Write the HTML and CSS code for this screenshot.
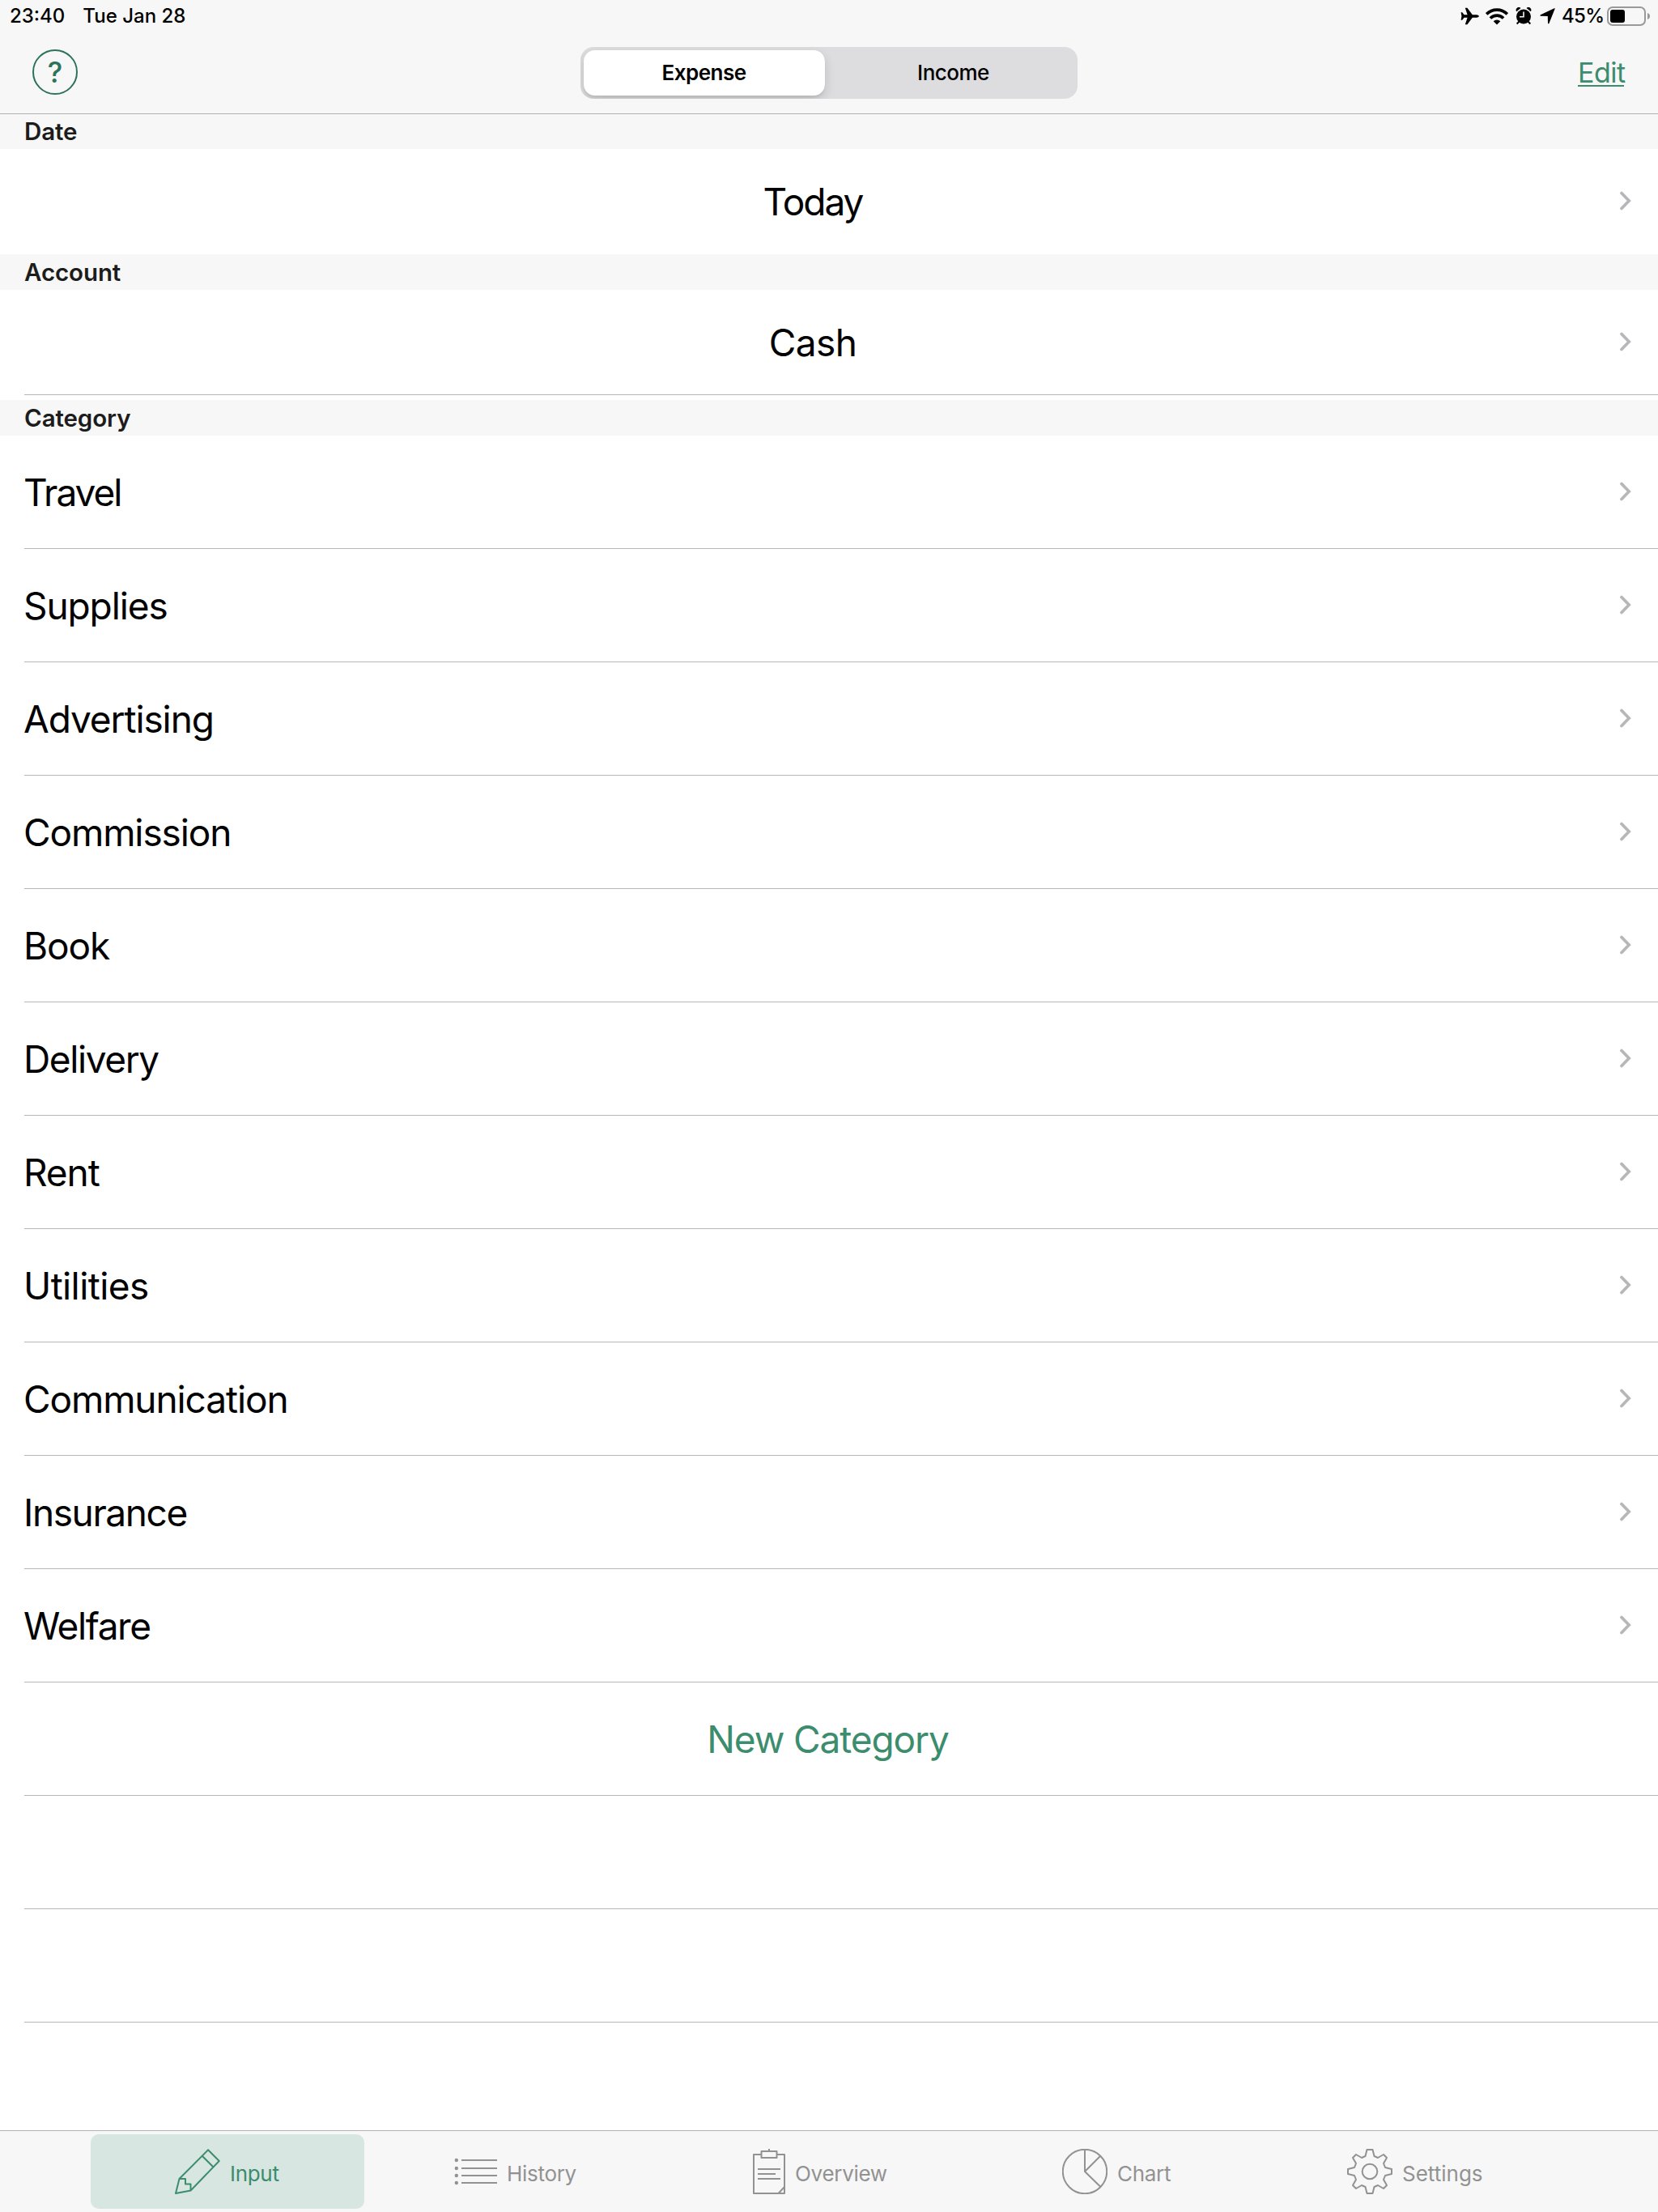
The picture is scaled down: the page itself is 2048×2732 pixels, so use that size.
FILE: index.html
```html
<!DOCTYPE html>
<html lang="en">
<head>
<meta charset="utf-8">
<title>Input</title>
<link rel="stylesheet" href="styles.css">
</head>
<body>
<svg class="defs" width="0" height="0"><symbol id="chev" viewBox="0 0 14 24"><path d="M2 2.500L11.200 12L2 21.500" fill="none" stroke="#b7b7b9" stroke-width="3.700" stroke-linecap="round"/></symbol></svg>
<header class="top">
  <div class="status">
    <span class="time">23:40</span><span class="day">Tue Jan 28</span>
    <div class="indicators">
      <svg class="plane" width="24" height="22" viewBox="0 0 24 22"><path d="M22.800 11c0-1-1.600-1.700-3-1.700h-5L8.400.8H5.800l2.800 8.400H4.600L2.200 6.300H.6L1.400 11 .6 15.700h1.600l2.400-2.900h4l-2.800 8.400h2.600l6.400-8.500h5c1.400 0 3-.7 3-1.700z"/></svg>
      <svg class="wifi" width="28" height="21" viewBox="0 0 28 21"><g fill="none" stroke="#000" stroke-width="3.700"><path d="M1.200 7.400a18 18 0 0 1 25.600 0"/><path d="M5.900 12.500a11.500 11.500 0 0 1 16.200 0"/></g><path d="M14 20.500l-4.300-4.200a6 6 0 0 1 8.600 0z"/></svg>
      <svg class="alarm" width="20" height="22" viewBox="0 0 20 22"><circle cx="10" cy="11.500" r="9"/><path d="M1.200 5.200a3.400 3.400 0 0 1 5.300-4.200zM18.800 5.200a3.400 3.400 0 0 0-5.300-4.200z"/><path d="M4.500 17.500l-2.800 3M15.500 17.500l2.800 3" stroke="#000" stroke-width="2"/><path d="M10 5.500v6.300H5" fill="none" stroke="#f7f7f7" stroke-width="1.600"/></svg>
      <svg class="arrow" width="20" height="20" viewBox="0 0 20 20"><path d="M18.600 1.100c.4-.6-.1-1.100-.8-.8L1 8.300c-1 .5-.8 1.500.2 1.500l8.600.2.200 8.400c0 1.100 1 1.300 1.500.3z"/></svg>
      <span class="pct">45%</span>
      <svg class="battery" width="54" height="24" viewBox="0 0 54 24"><rect x="1" y="1" width="46" height="22" rx="6" fill="none" stroke="#999" stroke-width="2"/><rect x="4" y="4" width="18" height="16" rx="3"/><path d="M50 8c4 1.300 4 6.700 0 8z" fill="#999"/></svg>
    </div>
  </div>
  <nav class="bar">
    <div class="help">?</div>
    <div class="segments"><div class="seg on">Expense</div><div class="seg">Income</div></div>
    <div class="edit">Edit</div>
  </nav>
</header>
<main>
  <h2 class="section first">Date</h2>
  <div class="pick"><span class="tight">Today</span><svg class="chev"><use href="#chev"/></svg></div>
  <h2 class="section">Account</h2>
  <div class="pick account"><span class="loose">Cash</span><svg class="chev"><use href="#chev"/></svg></div>
  <h2 class="section category">Category</h2>
  <ul class="list">
    <li><span class="tight">Travel</span><svg class="chev"><use href="#chev"/></svg></li>
    <li><span>Supplies</span><svg class="chev"><use href="#chev"/></svg></li>
    <li><span>Advertising</span><svg class="chev"><use href="#chev"/></svg></li>
    <li><span>Commission</span><svg class="chev"><use href="#chev"/></svg></li>
    <li><span>Book</span><svg class="chev"><use href="#chev"/></svg></li>
    <li><span class="snug">Delivery</span><svg class="chev"><use href="#chev"/></svg></li>
    <li><span>Rent</span><svg class="chev"><use href="#chev"/></svg></li>
    <li><span class="loose">Utilities</span><svg class="chev"><use href="#chev"/></svg></li>
    <li><span>Communication</span><svg class="chev"><use href="#chev"/></svg></li>
    <li><span class="snug">Insurance</span><svg class="chev"><use href="#chev"/></svg></li>
    <li><span class="snug">Welfare</span><svg class="chev"><use href="#chev"/></svg></li>
    <li class="new"><span>New Category</span></li>
    <li></li>
    <li></li>
  </ul>
</main>
<footer class="tabs">
  <div class="tab on"><svg width="56" height="56" viewBox="0 0 56 56"><path d="M1 55L5.500 37L41 1.300L54.700 15L19.500 51.500ZM33.500 8.500L47.500 22.500M5.500 37H13V43.500H19.500V51.500"/></svg><span>Input</span></div>
  <div class="tab"><svg width="56" height="56" viewBox="0 0 56 56"><path d="M12 14H56M12 24H56M12 33H56M12 42H56"/><g fill="#929292" stroke="none"><circle cx="5.800" cy="14" r="2.200"/><circle cx="5.800" cy="24" r="2.200"/><circle cx="5.800" cy="33" r="2.200"/><circle cx="5.800" cy="42" r="2.200"/></g></svg><span>History</span></div>
  <div class="tab"><svg width="40" height="56" viewBox="0 0 40 56"><path d="M10.500 7H1V55H39V7H29.500M10.500 3H29.500V11H10.500ZM20 0V3M6 25H34M6 31H28M6 37H34M31.500 55L39 47"/></svg><span>Overview</span></div>
  <div class="tab"><svg width="56" height="56" viewBox="0 0 56 56"><path d="M28 .8V28L47 9M28 28L47.500 47"/><circle cx="28" cy="28" r="27.200"/></svg><span>Chart</span></div>
  <div class="tab settings"><svg width="56" height="56" viewBox="0 0 56 56"><path d="M24.500 1H31.500L33.500 9L38 11L45 7L49 11L45 18L47 23L55 25V31L47 33L45 38L49 45L45 49L38 45L33.500 47L31.500 55H24.500L22.500 47L18 45L11 49L7 45L11 38L9 33L1 31V25L9 23L11 18L7 11L11 7L18 11L22.500 9Z"/><circle cx="28" cy="28" r="9.300"/></svg><span>Settings</span></div>
</footer>
</body>
</html>
```
FILE: styles.css
```css
* { box-sizing: border-box; }
body { margin: 0; width: 2048px; height: 2732px; display: flex; flex-direction: column; overflow: hidden; background: #fff; color: #000; font-family: Inter, "Liberation Sans", sans-serif; }
.defs { display: none; }
.top { height: 141px; background: #f7f7f7; border-bottom: 1px solid #b2b2b2; }
.status { height: 40px; display: flex; align-items: center; padding: 0 9px 0 12px; font-size: 24px; line-height: 40px; font-weight: 500; }
.day { margin-left: 22px; }
.indicators { margin-left: auto; display: flex; align-items: center; }
.wifi { margin-left: 7px; }
.alarm { margin-left: 9px; }
.arrow { margin-left: 10px; }
.pct { width: 56px; margin-left: 7px; letter-spacing: -0.7px; }
.bar { height: 100px; display: flex; justify-content: space-between; padding: 18px 42px 0 40px; }
.help { width: 56px; height: 56px; margin-top: 3px; border: 2px solid #2b7359; border-radius: 50%; color: #2b7359; font-size: 35px; line-height: 52px; font-weight: 500; text-align: center; }
.segments { width: 614px; height: 64px; margin-left: 2px; padding: 4px; display: flex; border-radius: 16px; background: #dddddf; overflow: hidden; }
.seg { flex: 1; display: flex; align-items: center; justify-content: center; font-size: 26px; font-weight: 500; padding: 0 0 2px 10px; letter-spacing: -0.5px; }
.seg.on { flex: 0 0 298px; padding: 0 0 2px; border-radius: 14px; background: #fff; font-weight: 600; box-shadow: 0 5px 14px rgba(0,0,0,.14), 0 3px 2px rgba(0,0,0,.05); }
.edit { align-self: flex-start; width: 57px; margin-top: 11px; height: 38px; border-bottom: 2px solid #3c8c6e; color: #3c8c6e; font-size: 34px; line-height: 42px; letter-spacing: -0.5px; white-space: nowrap; }
.section { margin: 0; height: 44px; padding-left: 30px; background: #f7f7f7; color: #1c1c1c; font-size: 29.5px; line-height: 44.5px; font-weight: 600; letter-spacing: -0.1px; }
.first { height: 43px; line-height: 43px; }
.pick { height: 130px; display: flex; align-items: center; justify-content: center; position: relative; font-size: 46px; padding-right: 40px; letter-spacing: -1.1px; }
.account { margin-left: 30px; padding-right: 70px; border-bottom: 1px solid #b6b6b8; }
.category { margin-top: 6px; }
.chev { width: 14px; height: 24px; flex: none; margin-bottom: 1px; }
.pick .chev { position: absolute; right: 33px; top: 52px; }
.list { margin: 0 0 0 30px; padding: 0; list-style: none; font-size: 46px; letter-spacing: -1.1px; }
.list li { height: 140px; padding-right: 33px; display: flex; align-items: center; justify-content: space-between; border-bottom: 1px solid #b6b6b8; }
.list li span { margin-left: -1px; }
.list .new { justify-content: center; color: #3c8c6e; padding-right: 32px; }
.tight { letter-spacing: -2px; }
.snug { letter-spacing: -1.4px; }
.loose { letter-spacing: -0.6px; }
.tabs { margin-top: auto; height: 101px; border-top: 1px solid #b2b2b2; background: #f7f7f7; padding: 4px 0 4px 112px; display: grid; grid-template-columns: 446px 372px 382px 352px 300px; font-size: 26px; letter-spacing: -0.3px; color: #929292; }
.tab { display: flex; align-items: center; gap: 12px; }
.tab span { padding-top: 4px; }
.tab svg { fill: none; stroke: currentColor; stroke-width: 2; stroke-linejoin: round; }
.tab.on { width: 338px; padding-left: 104px; border-radius: 10px; background: #d7e6e1; color: #3c8c6e; }
.settings { letter-spacing: 0; }
```
